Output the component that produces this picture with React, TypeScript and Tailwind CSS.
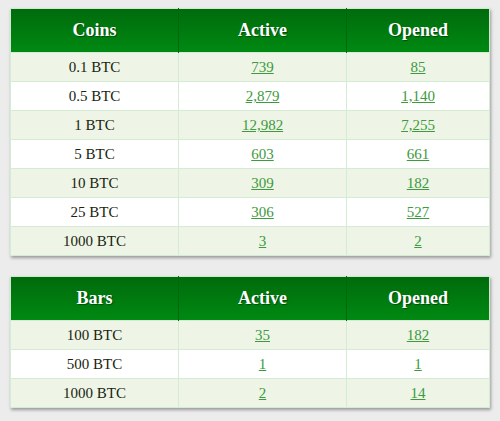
import React from 'react';

type Row = { label: string; active: string; opened: string };

const coins: Row[] = [
    { label: '0.1 BTC', active: '739', opened: '85' },
    { label: '0.5 BTC', active: '2,879', opened: '1,140' },
    { label: '1 BTC', active: '12,982', opened: '7,255' },
    { label: '5 BTC', active: '603', opened: '661' },
    { label: '10 BTC', active: '309', opened: '182' },
    { label: '25 BTC', active: '306', opened: '527' },
    { label: '1000 BTC', active: '3', opened: '2' },
];

const bars: Row[] = [
    { label: '100 BTC', active: '35', opened: '182' },
    { label: '500 BTC', active: '1', opened: '1' },
    { label: '1000 BTC', active: '2', opened: '14' },
];

const BoxTable: React.FC<{ title: string; rows: Row[] }> = ({ title, rows }) => (
    <div className="w-[480px] shadow-[1px_2px_3px_rgba(0,0,0,0.35)]">
        <table className="w-full border-collapse border border-[#cfe9cf] font-['Liberation_Serif',serif] text-[15px]">
            <thead>
                <tr className="h-[44px] bg-gradient-to-b from-[#006b0c] to-[#008a12] text-[18px] font-bold text-white [text-shadow:1px_1px_1px_rgba(0,0,0,0.4)]">
                    <th className="w-[168px] border-r border-[#00670b] font-bold">{title}</th>
                    <th className="w-[168px] border-r border-[#00670b] font-bold">Active</th>
                    <th className="font-bold">Opened</th>
                </tr>
            </thead>
            <tbody>
                {rows.map((r, i) => (
                    <tr key={r.label} className={`h-[29px] ${i % 2 === 0 ? 'bg-[#eef5e6]' : 'bg-white'}`}>
                        <td className="border border-[#d3ecd3] pt-[1px] text-center text-[#18240f]">{r.label}</td>
                        <td className="border border-[#d3ecd3] pt-[1px] text-center">
                            <a href="#" className="text-[#3d9a3d] underline">{r.active}</a>
                        </td>
                        <td className="border border-[#d3ecd3] pt-[1px] text-center">
                            <a href="#" className="text-[#3d9a3d] underline">{r.opened}</a>
                        </td>
                    </tr>
                ))}
            </tbody>
        </table>
    </div>
);

const App: React.FC = () => {
    return (
        <section className="flex min-h-[421px] w-[500px] flex-col gap-[20px] bg-[#ececec] px-[10px] pt-[8px]">
            <BoxTable title="Coins" rows={coins} />
            <BoxTable title="Bars" rows={bars} />
        </section>
    );
};

export default App;
